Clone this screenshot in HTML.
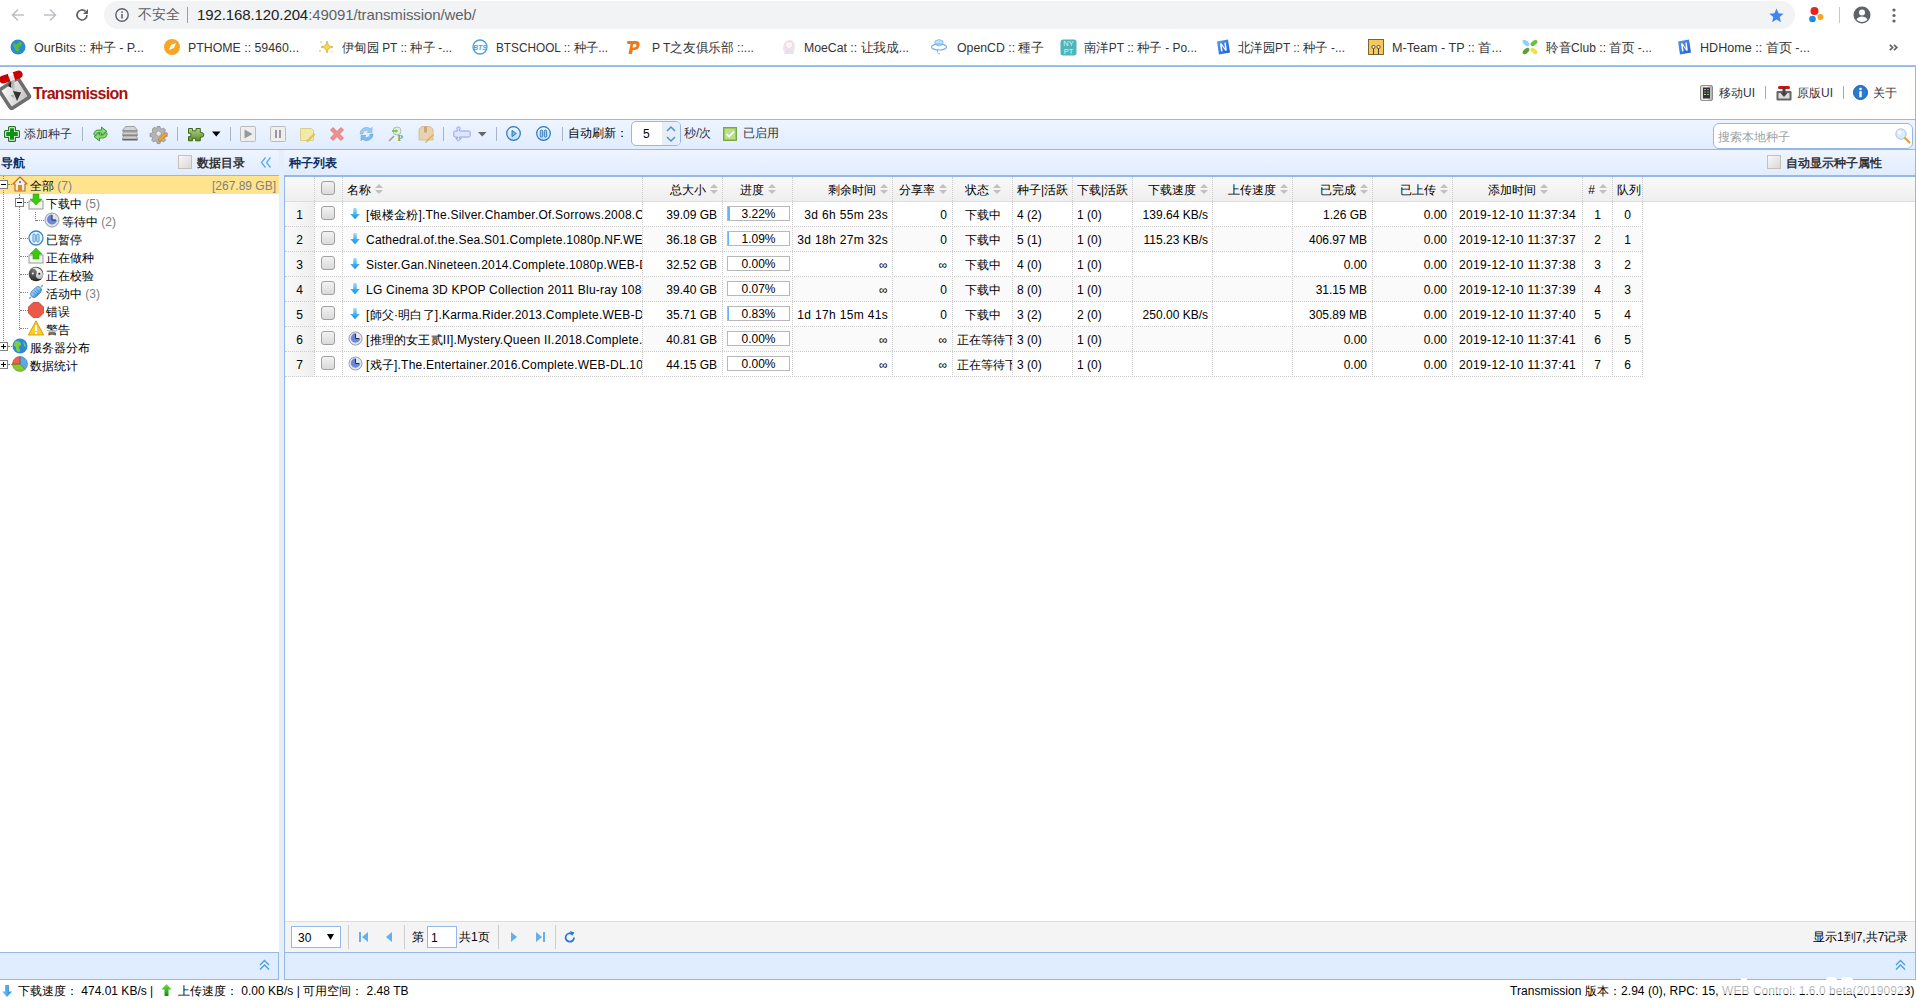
<!DOCTYPE html>
<html><head><meta charset="utf-8">
<style>
*{box-sizing:border-box;margin:0;padding:0}
html,body{width:1916px;height:1000px;overflow:hidden;background:#fff;font-family:"Liberation Sans",sans-serif;font-size:12px;color:#000}
.a{position:absolute}
.t{position:absolute;white-space:nowrap;line-height:1}
svg{position:absolute;overflow:visible}
/* chrome */
#chrome{left:0;top:0;width:1916px;height:66px;background:#fff}
#omni{left:104px;top:1px;width:1691px;height:28px;border-radius:14px;background:#f1f3f4}
.bm{position:absolute;top:40px;height:16px;font-size:12.5px;color:#333;white-space:nowrap;line-height:16px}
/* page */
.pb{border:0 solid #95b8e7}
.ph{background:linear-gradient(#eff5ff,#e0ecff)}
.sep{position:absolute;width:1px;height:14px;background:#a8b4c8;top:127px}
.ttl{font-weight:bold;color:#0e2d5f}
.grid td{}
.hd{position:absolute;top:177px;height:24px;line-height:26px;color:#000;white-space:nowrap}
.vl{position:absolute;width:0;border-left:1px dotted #ccc}
.hl{position:absolute;height:0;border-top:1px dotted #ccc}
.cb{position:absolute;width:14px;height:14px;border:1px solid #a0a0a0;border-radius:3px;background:linear-gradient(#f2f2f2,#dadada)}
.row{position:absolute;left:285px;width:1357px;height:25px}
.c{position:absolute;top:0;height:24px;line-height:26px;white-space:nowrap;overflow:hidden}
.r{text-align:right}
.ctr{text-align:center}
.pg{position:absolute;top:3px;width:60px;height:16px;border:1px solid #95b8e7;background:#fff;text-align:center;line-height:14px}
.tn{position:absolute;height:18px;line-height:20px;white-space:nowrap}
.cnt{color:#808080}
.dv{position:absolute;width:0;border-left:1px dotted #808080}
.dh{position:absolute;height:0;border-top:1px dotted #808080}
.hit{position:absolute;width:9px;height:9px;border:1px solid #808080;background:#fff}
.hit:before{content:"";position:absolute;left:1px;top:3px;width:5px;height:1px;background:#000}
.plus:after{content:"";position:absolute;left:3px;top:1px;width:1px;height:5px;background:#000}
</style></head><body>
<svg width="0" height="0" style="position:absolute"><defs><linearGradient id="arw" x1="0" y1="0" x2="0" y2="1"><stop offset="0" stop-color="#a8dcfc"/><stop offset="0.55" stop-color="#3ab0f6"/><stop offset="1" stop-color="#1a90e8"/></linearGradient></defs></svg>
<!-- ============ BROWSER CHROME ============ -->

<div id="chrome" class="a">
  <div id="omni" class="a"></div>
  <svg style="left:11px;top:8px" width="14" height="14" viewBox="0 0 14 14"><path d="M13 7H2M7 1.5L1.5 7 7 12.5" stroke="#bdc1c6" stroke-width="1.6" fill="none"/></svg>
  <svg style="left:43px;top:8px" width="14" height="14" viewBox="0 0 14 14"><path d="M1 7h11M7 1.5L12.5 7 7 12.5" stroke="#bdc1c6" stroke-width="1.6" fill="none"/></svg>
  <svg style="left:75px;top:8px" width="14" height="14" viewBox="0 0 14 14"><path d="M12 7a5 5 0 1 1-1.5-3.6" stroke="#5f6368" stroke-width="1.7" fill="none"/><path d="M13 1v5H8z" fill="#5f6368"/></svg>
  <svg style="left:115px;top:8px" width="14" height="14" viewBox="0 0 14 14"><circle cx="7" cy="7" r="6.2" stroke="#5f6368" stroke-width="1.4" fill="none"/><rect x="6.2" y="6" width="1.6" height="4.5" fill="#5f6368"/><rect x="6.2" y="3.3" width="1.6" height="1.6" fill="#5f6368"/></svg>
  <div class="t" style="left:138px;top:7px;font-size:14px;color:#5f6368">不安全</div>
  <div class="a" style="left:187px;top:7px;width:1px;height:16px;background:#9aa0a6"></div>
  <div class="t" style="left:197px;top:7px;font-size:15px;color:#202124;letter-spacing:-0.1px">192.168.120.204<span style="color:#5f6368">:49091/transmission/web/</span></div>
  <svg style="left:1768px;top:7px" width="17" height="17" viewBox="0 0 24 24"><path d="M12 2l2.9 6.9 7.1.6-5.4 4.7 1.6 7.2L12 17.6 5.8 21.4l1.6-7.2L2 9.5l7.1-.6z" fill="#4285f4"/></svg>
  <svg style="left:1808px;top:6px" width="18" height="18" viewBox="0 0 18 18"><circle cx="6.5" cy="5" r="4" fill="#e8221f"/><circle cx="4.5" cy="13" r="3.3" fill="#1e88e5"/><circle cx="12.5" cy="11" r="3" fill="#f5a623"/></svg>
  <div class="a" style="left:1839px;top:7px;width:1px;height:16px;background:#c8c8c8"></div>
  <svg style="left:1853px;top:6px" width="18" height="18" viewBox="0 0 18 18"><circle cx="9" cy="9" r="8.5" fill="#5f6368"/><circle cx="9" cy="6.5" r="3" fill="#fff"/><path d="M3.5 13.5c1.5-2.2 3.3-3 5.5-3s4 .8 5.5 3c-1.3 1.6-3.3 2.5-5.5 2.5s-4.2-.9-5.5-2.5z" fill="#fff"/></svg>
  <svg style="left:1892px;top:8px" width="4" height="16" viewBox="0 0 4 16"><circle cx="2" cy="2" r="1.6" fill="#5f6368"/><circle cx="2" cy="7.5" r="1.6" fill="#5f6368"/><circle cx="2" cy="13" r="1.6" fill="#5f6368"/></svg>
  <svg style="left:10px;top:39px" width="16" height="16" viewBox="0 0 16 16"><circle cx="8" cy="8" r="7.5" fill="#2b8ad8"/><path d="M3 5c2-1 3 1 4 0s2-3 4-2 1 3 0 4-3 1-2 3-2 3-3 2-1-3-2-4-1-2-1-3z" fill="#5cb83a"/></svg>
  <div class="bm" style="left:34px;transform:scaleX(1.002);transform-origin:0 0">OurBits :: 种子 - P...</div>
  <svg style="left:164px;top:39px" width="16" height="16" viewBox="0 0 16 16"><circle cx="8" cy="8" r="8" fill="#f5a623"/><path d="M5 11l2-5 5-2-2 5z" fill="#fff"/></svg>
  <div class="bm" style="left:188px;transform:scaleX(0.987);transform-origin:0 0">PTHOME :: 59460...</div>
  <svg style="left:318px;top:39px" width="16" height="16" viewBox="0 0 16 16"><path d="M9 2l1.5 4.5L15 8l-4.5 1.5L9 14 7.5 9.5 3 8l4.5-1.5z" fill="#f6d850" stroke="#c8a020" stroke-width="0.6"/><circle cx="3" cy="3" r="1" fill="#f0d870"/><circle cx="2" cy="12" r="0.9" fill="#e8d070"/><circle cx="14" cy="13" r="0.8" fill="#e8d070"/></svg>
  <div class="bm" style="left:342px;transform:scaleX(0.947);transform-origin:0 0">伊甸园 PT :: 种子 -...</div>
  <svg style="left:472px;top:39px" width="16" height="16" viewBox="0 0 16 16"><circle cx="8" cy="8" r="7" stroke="#4a9fd8" stroke-width="1.3" fill="none"/><text x="8" y="10.5" font-size="7" font-family="Liberation Sans" font-style="italic" font-weight="bold" fill="#4a9fd8" text-anchor="middle">BTS</text></svg>
  <div class="bm" style="left:496px;transform:scaleX(0.944);transform-origin:0 0">BTSCHOOL :: 种子...</div>
  <svg style="left:626px;top:39px" width="16" height="16" viewBox="0 0 16 16"><path d="M1 2H9.5Q14.5 2 13.5 6.5T8 11H6.8L5.8 15H2.5L4.6 5H1.5Z" fill="#f07818"/><path d="M7.3 5L6.5 8.5H8Q10.3 8.5 10.5 6.7T8.8 5Z" fill="#fff"/></svg>
  <div class="bm" style="left:652px;transform:scaleX(0.973);transform-origin:0 0">P T之友俱乐部 ::...</div>
  <svg style="left:781px;top:38px" width="16" height="17" viewBox="0 0 16 17"><path d="M3 14C1 10 2 3 8 2s7 7 5 12" fill="#f4e4ea"/><path d="M4 6Q8 1 12 6Q12 10 8 11Q4 10 4 6Z" fill="#fbf4f6" stroke="#e8c8d4" stroke-width="0.6"/><path d="M3 16L5 11H11L13 16Z" fill="#e8e0f0"/></svg>
  <div class="bm" style="left:804px;transform:scaleX(0.980);transform-origin:0 0">MoeCat :: 让我成...</div>
  <svg style="left:931px;top:38px" width="16" height="17" viewBox="0 0 16 17"><path d="M4 3Q8 0 12 3Q13 7 8 8Q3 7 4 3Z" fill="#bfe0f8" stroke="#7ab8e8" stroke-width="0.8"/><ellipse cx="8" cy="9" rx="7.5" ry="3" fill="none" stroke="#6ab0e8" stroke-width="1.1"/><path d="M7 11Q5 15 9 16" stroke="#7ab8e8" stroke-width="1" fill="none"/></svg>
  <div class="bm" style="left:957px;transform:scaleX(0.983);transform-origin:0 0">OpenCD :: 種子</div>
  <svg style="left:1060px;top:39px" width="17" height="17" viewBox="0 0 17 17"><rect x="0.5" y="0.5" width="16" height="16" rx="2.5" fill="#4cb6be"/><text x="8.5" y="7.3" font-size="7.5" fill="#d8f2f4" text-anchor="middle" font-family="Liberation Sans">NY</text><text x="8.5" y="15" font-size="7.5" fill="#d8f2f4" text-anchor="middle" font-family="Liberation Sans">PT</text></svg>
  <div class="bm" style="left:1084px;transform:scaleX(0.954);transform-origin:0 0">南洋PT :: 种子 - Po...</div>
  <svg style="left:1215px;top:39px" width="16" height="16" viewBox="0 0 16 16"><defs><linearGradient id="ng" x1="0" y1="0" x2="1" y2="1"><stop offset="0" stop-color="#5aa0f0"/><stop offset="1" stop-color="#1a5ad0"/></linearGradient></defs><path d="M2 2.5L13 0.5 15 13.5 4 15.5Z" fill="url(#ng)"/><path d="M5 4.5L6.5 4.2 10 9.5 9.3 3.8 10.8 3.5 11.8 11.5 10.3 11.8 6.8 6.5 7.5 12.2 6 12.5Z" fill="#fff"/></svg>
  <div class="bm" style="left:1238px;transform:scaleX(0.949);transform-origin:0 0">北洋园PT :: 种子 -...</div>
  <svg style="left:1368px;top:39px" width="16" height="16" viewBox="0 0 16 16"><rect x="0.5" y="0.5" width="15" height="15" fill="#f8c858" stroke="#6a5a30" stroke-width="0.9"/><circle cx="5.5" cy="8" r="1.6" fill="#fff" stroke="#333" stroke-width="0.8"/><circle cx="10.5" cy="8" r="1.6" fill="#fff" stroke="#333" stroke-width="0.8"/><path d="M5.5 9.6V15.5M10.5 9.6V15.5" stroke="#333" stroke-width="0.9"/></svg>
  <div class="bm" style="left:1392px;transform:scaleX(1.008);transform-origin:0 0">M-Team - TP :: 首...</div>
  <svg style="left:1522px;top:39px" width="16" height="16" viewBox="0 0 16 16"><ellipse cx="4" cy="4" rx="4" ry="2.2" transform="rotate(40 4 4)" fill="#8cd0f8"/><ellipse cx="12" cy="4" rx="4" ry="2.2" transform="rotate(-40 12 4)" fill="#6cc040"/><ellipse cx="4" cy="12" rx="4" ry="2.2" transform="rotate(-40 4 12)" fill="#5aa030"/><ellipse cx="12" cy="12" rx="4" ry="2.2" transform="rotate(40 12 12)" fill="#f0e040"/></svg>
  <div class="bm" style="left:1546px;transform:scaleX(0.966);transform-origin:0 0">聆音Club :: 首页 -...</div>
  <svg style="left:1676px;top:39px" width="16" height="16" viewBox="0 0 16 16"><defs><linearGradient id="ng2" x1="0" y1="0" x2="1" y2="1"><stop offset="0" stop-color="#5aa0f0"/><stop offset="1" stop-color="#1a5ad0"/></linearGradient></defs><path d="M2 2.5L13 0.5 15 13.5 4 15.5Z" fill="url(#ng2)"/><path d="M5 4.5L6.5 4.2 10 9.5 9.3 3.8 10.8 3.5 11.8 11.5 10.3 11.8 6.8 6.5 7.5 12.2 6 12.5Z" fill="#fff"/></svg>
  <div class="bm" style="left:1700px;transform:scaleX(1.006);transform-origin:0 0">HDHome :: 首页 -...</div>
  <svg style="left:1889px;top:44px" width="9" height="7" viewBox="0 0 9 7"><path d="M0.8 0.8L3.6 3.5 0.8 6.2M5 0.8L7.8 3.5 5 6.2" stroke="#5f6368" stroke-width="1.7" fill="none"/></svg>
  <div class="a" style="left:0;top:65px;width:1916px;height:1px;background:#c0bdbb"></div>
</div>

<!-- ============ PAGE ============ -->
<!-- header -->
<div class="a" style="left:0;top:66px;width:1916px;height:1px;background:#95b8e7"></div>
<div class="a" style="left:1915px;top:66px;width:1px;height:914px;background:#95b8e7"></div>
<svg style="left:0;top:68px" width="34" height="46" viewBox="0 0 34 46">
  <defs><linearGradient id="lg1" x1="0" y1="0" x2="1" y2="1"><stop offset="0" stop-color="#fafafa"/><stop offset="1" stop-color="#c4c4c4"/></linearGradient>
  <linearGradient id="lg2" x1="0" y1="0" x2="1" y2="0"><stop offset="0" stop-color="#777"/><stop offset="0.5" stop-color="#ddd"/><stop offset="1" stop-color="#888"/></linearGradient></defs>
  <g transform="rotate(-33 14.5 25.5)"><rect x="1.5" y="12.5" width="26" height="26" rx="3.5" fill="#6e6e6e"/><rect x="5" y="16" width="19" height="19" rx="1" fill="url(#lg1)"/></g>
  <path d="M9.5 9 L13.5 8 L17.5 25 L21 24 L17 33 L10.5 27.5 L14 26.5 Z" fill="url(#lg2)"/>
  <path d="M13 23 L21 24.5 L17 33 Z" fill="#1a1a1a" opacity="0.85"/>
  <path d="M8 18 L10.5 13 L11.5 20 Z" fill="#222"/>
  <g transform="rotate(-18 11 9)"><rect x="-1" y="5" width="24" height="8" rx="4" fill="#cc0000"/><rect x="9" y="5" width="5" height="8" fill="#e8e8e8"/><rect x="9" y="5" width="5" height="3" fill="#fff"/></g>
</svg>
<div class="t" style="left:33px;top:86px;font-size:16px;font-weight:bold;color:#a8110c;letter-spacing:-0.72px">Transmission</div>
<!-- header right links -->
<svg style="left:1700px;top:85px" width="13" height="16" viewBox="0 0 13 16"><defs><linearGradient id="ph" x1="0" y1="0" x2="1" y2="0"><stop offset="0" stop-color="#d8d8d8"/><stop offset="0.5" stop-color="#f4f4f4"/><stop offset="1" stop-color="#a8a8a8"/></linearGradient></defs><rect x="0.5" y="0.5" width="12" height="15" rx="1.5" fill="url(#ph)" stroke="#777" stroke-width="0.8"/><rect x="3" y="2.5" width="7" height="11" fill="#333"/><rect x="4" y="4" width="2" height="1" fill="#7c7"/><rect x="7" y="4" width="2" height="1" fill="#c66"/><rect x="4" y="6.5" width="2" height="1" fill="#69d"/><rect x="7" y="6.5" width="2" height="1" fill="#69d"/><rect x="4" y="9" width="2" height="1" fill="#dc6"/><rect x="7" y="9" width="2" height="1" fill="#7c7"/></svg>
<div class="t" style="left:1719px;top:87px;color:#333">移动UI</div>
<div class="a" style="left:1765px;top:86px;width:1px;height:13px;background:#a8a8c0"></div>
<svg style="left:1776px;top:85px" width="16" height="16" viewBox="0 0 16 16"><rect x="2" y="1" width="12" height="3" rx="1.5" fill="#cc1111"/><rect x="0.5" y="6" width="15" height="9.5" rx="1" fill="#666"/><rect x="2.5" y="8" width="11" height="5.5" fill="#ddd"/><path d="M6.5 2h3v6h2l-3.5 4-3.5-4h2z" fill="#444"/></svg>
<div class="t" style="left:1797px;top:87px;color:#333">原版UI</div>
<div class="a" style="left:1843px;top:86px;width:1px;height:13px;background:#a8a8c0"></div>
<svg style="left:1853px;top:85px" width="15" height="15" viewBox="0 0 15 15"><circle cx="7.5" cy="7.5" r="7" fill="#2a7ad0" stroke="#1a5aa8"/><circle cx="7.5" cy="4" r="1.3" fill="#fff"/><rect x="6.3" y="6.2" width="2.4" height="6" fill="#fff"/></svg>
<div class="t" style="left:1873px;top:87px;color:#333">关于</div>

<!-- toolbar -->
<div class="a ph" style="left:0;top:119px;width:1915px;height:31px;border-top:1px solid #95b8e7;border-bottom:1px solid #95b8e7"></div>
<svg style="left:4px;top:126px" width="16" height="16" viewBox="0 0 16 16"><path d="M5.5 0.6H10.5Q11.4 0.6 11.4 1.5V4.6H14.5Q15.4 4.6 15.4 5.5V10.5Q15.4 11.4 14.5 11.4H11.4V14.5Q11.4 15.4 10.5 15.4H5.5Q4.6 15.4 4.6 14.5V11.4H1.5Q0.6 11.4 0.6 10.5V5.5Q0.6 4.6 1.5 4.6H4.6V1.5Q4.6 0.6 5.5 0.6Z" fill="#fff" stroke="#2a6e2a" stroke-width="1.2"/><path d="M6 2.2H10V6H13.8V10H10V13.8H6V10H2.2V6H6Z" fill="#0c940c"/></svg>
<div class="t" style="left:24px;top:128px;color:#333">添加种子</div>
<div class="sep" style="left:82px"></div>
<svg style="left:93px;top:126px" width="15" height="16" viewBox="0 0 15 16"><path d="M0.8 8.5C1 5.5 3 4 5.5 4H8.5V1L13.8 5.3 8.5 9.6V7H5.8C4 7 3 8 2.6 9.8Z" fill="#86dc72" stroke="#2e8a2e" stroke-width="0.9" stroke-linejoin="round"/><path d="M14.2 7.5C14 10.5 12 12 9.5 12H6.5V15L1.2 10.7 6.5 6.4V9H9.2C11 9 12 8 12.4 6.2Z" fill="#86dc72" stroke="#2e8a2e" stroke-width="0.9" stroke-linejoin="round"/></svg>
<svg style="left:122px;top:126px" width="16" height="15" viewBox="0 0 16 15"><path d="M3.5 0.5H12.5L15.5 4.5H0.5Z" fill="#d4d4d4" stroke="#9a9a9a" stroke-width="0.9" stroke-linejoin="round"/><path d="M0.5 4.5H15.5V5.8H0.5Z" fill="#8a8a8a"/><path d="M1.5 6H14.5L15.5 8.8H0.5Z" fill="#cfcfcf" stroke="#9a9a9a" stroke-width="0.9" stroke-linejoin="round"/><path d="M0.5 8.8H15.5V10H0.5Z" fill="#7a7a7a"/><path d="M1.5 10H14.5L15.5 13H0.5Z" fill="#cfcfcf" stroke="#9a9a9a" stroke-width="0.9" stroke-linejoin="round"/><path d="M0.5 13H15.5V14.5H0.5Z" fill="#666"/></svg>
<svg style="left:151px;top:126px" width="17" height="16" viewBox="0 0 17 16"><g fill="#b4b4b4" stroke="#8a8a8a" stroke-width="0.8"><path d="M6.5 0.5h3l.4 2 1.6.8 1.8-1.1 2 2-1.1 1.8.8 1.6 2 .4v3l-2 .4-.8 1.6 1.1 1.8-2 2-1.8-1.1-1.6.8-.4 2h-3l-.4-2-1.6-.8-1.8 1.1-2-2 1.1-1.8-.8-1.6-2-.4v-3l2-.4.8-1.6L1.5 3.2l2-2 1.8 1.1 1.6-.8z" transform="scale(0.95)"/></g><circle cx="7.6" cy="7.6" r="2.6" fill="#e8e8e8" stroke="#999" stroke-width="0.8"/><path d="M8 15.5L7.5 13 14 6.5 16 8.5 9.5 15Z" fill="#f0a828" stroke="#b87010" stroke-width="0.6"/><path d="M14 6.5l1-1 2 2-1 1z" fill="#e080d0"/></svg>
<div class="sep" style="left:177px"></div>
<svg style="left:188px;top:128px" width="17" height="14" viewBox="0 0 17 14"><defs><linearGradient id="pz" x1="0" y1="0" x2="0" y2="1"><stop offset="0" stop-color="#b4d08a"/><stop offset="1" stop-color="#5a8a28"/></linearGradient></defs><path d="M0.5 0.5H4.5V2.8H8V0.5H12.3V4.6H13.5A2.3 2.3 0 0 1 13.5 9.2H12.3V12.8H7.6V10.3H4.6V12.8H0.5V8.6H2.8V5.3H0.5Z" fill="url(#pz)" stroke="#3e6a18" stroke-width="1" stroke-linejoin="round"/></svg>
<svg style="left:212px;top:131px" width="9" height="6" viewBox="0 0 9 6"><path d="M0 0.5h8.5L4.25 5.5z" fill="#000"/></svg>
<div class="sep" style="left:230px"></div>
<svg style="left:240px;top:126px" width="16" height="16" viewBox="0 0 16 16"><rect x="0.5" y="0.5" width="15" height="15" rx="1" fill="#eee" stroke="#bbb"/><path d="M4.5 3.5l8 4.5-8 4.5z" fill="#999"/></svg>
<svg style="left:270px;top:126px" width="16" height="16" viewBox="0 0 16 16"><rect x="0.5" y="0.5" width="15" height="15" rx="1" fill="#eee" stroke="#bbb"/><rect x="5" y="4" width="2" height="8" fill="#999"/><rect x="9" y="4" width="2" height="8" fill="#999"/></svg>
<svg style="left:300px;top:126px" width="16" height="16" viewBox="0 0 16 16"><path d="M0.5 2.5h11l2 2v10h-13z" fill="#f2eaa8" stroke="#d8cf8a"/><path d="M6 15l8-8 1.5 1.5-8 8z" fill="#e0c060"/></svg>
<svg style="left:329px;top:126px" width="16" height="16" viewBox="0 0 16 16"><path d="M1.5 4L4 1.5 8 5.5 12 1.5 14.5 4 10.5 8 14.5 12 12 14.5 8 10.5 4 14.5 1.5 12 5.5 8z" fill="#f29090" stroke="#e07070" stroke-width="0.8" stroke-linejoin="round"/></svg>
<svg style="left:359px;top:126px" width="15" height="16" viewBox="0 0 15 16"><path d="M1 8A6.5 6.5 0 0 1 11.5 2.8L13 1.3V6.5H8L9.6 4.9A3.8 3.8 0 0 0 3.8 8Z" fill="#9ccaf2" stroke="#7ab4e8" stroke-width="0.6"/><path d="M14 8A6.5 6.5 0 0 1 3.5 13.2L2 14.7V9.5H7L5.4 11.1A3.8 3.8 0 0 0 11.2 8Z" fill="#7cbcf0" stroke="#5aa4e4" stroke-width="0.6"/></svg>
<svg style="left:388px;top:126px" width="16" height="16" viewBox="0 0 16 16"><circle cx="9" cy="5" r="4" fill="#e8f0e8" stroke="#aac0aa"/><path d="M1 15l5-5" stroke="#999" stroke-width="1.5"/><path d="M4 4h4l-1.5-2 4 3-4 3L8 6H4z" fill="#7cc86a"/><text x="9.5" y="15" font-size="9" font-weight="bold" font-family="Liberation Serif" fill="#6aaa50">P</text></svg>
<svg style="left:418px;top:126px" width="16" height="16" viewBox="0 0 16 16"><path d="M1 3l3-2.5h8L15 3v11H1z" fill="#e8d2b0" stroke="#d0b890" stroke-width="0.8"/><rect x="6" y="0.5" width="3" height="6" fill="#c8a878"/><path d="M7 16l8-8 1 1-8 8z" fill="#e0b050"/></svg>
<div class="sep" style="left:443px"></div>
<svg style="left:453px;top:126px" width="18" height="16" viewBox="0 0 18 16"><path d="M5.5 0.8A1.6 1.6 0 0 1 6.6 3.6V5H15.6Q17.2 5 17.2 6.6V9.4Q17.2 11 15.6 11H6.6V12.4H8.2L5.5 15.2 2.8 12.4H4.4V11H2.4Q0.8 11 0.8 9.4V6.6Q0.8 5 2.4 5H4.4V3.6A1.6 1.6 0 0 1 5.5 0.8Z" fill="#dfe5fa" stroke="#8e9ff0" stroke-width="1"/></svg>
<svg style="left:478px;top:132px" width="9" height="5" viewBox="0 0 9 5"><path d="M0 0h8.5L4.25 4.5z" fill="#666"/></svg>
<div class="sep" style="left:496px"></div>
<svg style="left:506px;top:126px" width="15" height="15" viewBox="0 0 15 15"><defs><linearGradient id="pc" x1="0" y1="0" x2="0" y2="1"><stop offset="0" stop-color="#f4faff"/><stop offset="1" stop-color="#b8dcf6"/></linearGradient></defs><circle cx="7.5" cy="7.5" r="6.8" fill="url(#pc)" stroke="#2f74b8" stroke-width="1.2"/><path d="M6 4.3L10.3 7.5 6 10.7Z" fill="#6ab8f0" stroke="#2f74b8" stroke-width="0.9" stroke-linejoin="round"/></svg>
<svg style="left:536px;top:126px" width="15" height="15" viewBox="0 0 15 15"><circle cx="7.5" cy="7.5" r="6.8" fill="url(#pc)" stroke="#2f74b8" stroke-width="1.2"/><rect x="4.3" y="4" width="2.4" height="7" rx="1.2" fill="#9ad0f6" stroke="#2f74b8" stroke-width="0.9"/><rect x="8.3" y="4" width="2.4" height="7" rx="1.2" fill="#9ad0f6" stroke="#2f74b8" stroke-width="0.9"/></svg>
<div class="sep" style="left:562px"></div>
<div class="t" style="left:568px;top:127px;color:#000">自动刷新：</div>
<div class="a" style="left:631px;top:121px;width:50px;height:25px;border:1px solid #95b8e7;border-radius:5px;background:#fff;overflow:hidden">
  <div class="a" style="left:30px;top:0;width:19px;height:23px;background:#e7eef8"></div>
  <div class="t" style="left:11px;top:6px">5</div>
  <svg style="left:33px;top:3px" width="12" height="18" viewBox="0 0 12 18"><path d="M2 6l4-4 4 4" stroke="#4a90d8" stroke-width="1.5" fill="none"/><path d="M2 12l4 4 4-4" stroke="#4a90d8" stroke-width="1.5" fill="none"/></svg>
</div>
<div class="t" style="left:684px;top:127px;color:#333">秒/次</div>
<svg style="left:723px;top:127px" width="14" height="14" viewBox="0 0 14 14"><rect x="0.5" y="0.5" width="13" height="13" fill="#9bc85a" stroke="#7aa840"/><rect x="2" y="2" width="10" height="10" fill="#b8e08a"/><path d="M3.5 7l2.5 2.5 5-5" stroke="#fff" stroke-width="1.6" fill="none"/></svg>
<div class="t" style="left:743px;top:127px;color:#333">已启用</div>
<!-- search -->
<div class="a" style="left:1713px;top:123px;width:200px;height:26px;border:1px solid #95b8e7;border-radius:6px;background:#fff"></div>
<div class="t" style="left:1718px;top:131px;color:#a0a0a0">搜索本地种子</div>
<svg style="left:1895px;top:128px" width="16" height="16" viewBox="0 0 16 16"><circle cx="6" cy="6" r="5.2" fill="#d8ecfc" stroke="#b0c8dc" stroke-width="1"/><circle cx="4.5" cy="4.5" r="2" fill="#f4faff"/><path d="M10 10l4.5 4.5" stroke="#e0a048" stroke-width="2.2" stroke-linecap="round"/></svg>

<!-- left panel -->
<div class="a ph" style="left:0;top:150px;width:279px;height:26px;border-bottom:1px solid #95b8e7"></div>
<div class="t ttl" style="left:1px;top:157px">导航</div>
<div class="cb" style="left:178px;top:155px;border-color:#c8c0b0;border-radius:0;background:linear-gradient(135deg,#f8f8f8,#d8d8d8)"></div>
<div class="t ttl" style="left:197px;top:157px;color:#333">数据目录</div>
<svg style="left:260px;top:157px" width="12" height="11" viewBox="0 0 12 11"><path d="M5.5 0.5L1.5 5.5 5.5 10.5M10.5 0.5L6.5 5.5 10.5 10.5" stroke="#5aaaf0" stroke-width="1.3" fill="none"/></svg>
<!-- splitter -->
<div class="a" style="left:279px;top:150px;width:5px;height:830px;background:#e6eef8"></div>
<!-- right panel header -->
<div class="a ph" style="left:284px;top:150px;width:1631px;height:26px"></div>
<div class="t ttl" style="left:289px;top:157px">种子列表</div>
<div class="cb" style="left:1767px;top:155px;border-color:#c8c0b0;border-radius:0;background:linear-gradient(135deg,#f8f8f8,#d8d8d8)"></div>
<div class="t ttl" style="left:1786px;top:157px;color:#333">自动显示种子属性</div>
<!-- datagrid frame -->
<div class="a" style="left:284px;top:175px;width:1631px;height:2px;background:#95b8e7"></div>
<div class="a" style="left:284px;top:176px;width:1px;height:776px;background:#95b8e7"></div>
<!-- tree -->
<div class="a" style="left:0;top:176px;width:279px;height:18px;background:#ffe48d"></div>
<div class="dv" style="left:3px;top:176px;height:171px"></div>
<div class="dv" style="left:19px;top:194px;height:136px"></div>
<div class="dv" style="left:35px;top:212px;height:9px"></div>
<div class="dh" style="left:8px;top:184px;width:4px"></div>
<div class="dh" style="left:24px;top:202px;width:4px"></div>
<div class="dh" style="left:36px;top:220px;width:8px"></div>
<div class="dh" style="left:20px;top:238px;width:8px"></div>
<div class="dh" style="left:20px;top:256px;width:8px"></div>
<div class="dh" style="left:20px;top:274px;width:8px"></div>
<div class="dh" style="left:20px;top:292px;width:8px"></div>
<div class="dh" style="left:20px;top:310px;width:8px"></div>
<div class="dh" style="left:20px;top:328px;width:8px"></div>
<div class="dh" style="left:8px;top:346px;width:4px"></div>
<div class="dh" style="left:8px;top:364px;width:4px"></div>
<div class="hit" style="left:-1px;top:180px"></div>
<div class="hit" style="left:15px;top:198px"></div>
<div class="hit plus" style="left:-1px;top:342px"></div>
<div class="hit plus" style="left:-1px;top:360px"></div>
<svg style="left:12px;top:176px" width="16" height="16" viewBox="0 0 16 16"><path d="M8 1L1 8h2v7h10V8h2z" fill="#f5eedc" stroke="#b8702a" stroke-width="1.2" stroke-linejoin="round"/><rect x="6" y="9" width="4" height="6" fill="#d88a2a"/><circle cx="8" cy="6" r="1" fill="#2a6ad0"/></svg>
<div class="tn" style="left:30px;top:176px">全部 <span class="cnt">(7)</span></div>
<div class="tn cnt" style="left:212px;top:176px">[267.89 GB]</div>
<svg style="left:28px;top:194px" width="16" height="16" viewBox="0 0 16 16"><rect x="1" y="7" width="14" height="8" fill="#f4f4f0" stroke="#999" stroke-width="1"/><path d="M5 0h6v5h3l-6 6-6-6h3z" fill="#3cc80c" stroke="#2a9a0a" stroke-width="0.5"/></svg>
<div class="tn" style="left:46px;top:194px">下载中 <span class="cnt">(5)</span></div>
<svg style="left:44px;top:212px" width="16" height="16" viewBox="0 0 16 16"><circle cx="8" cy="8" r="7" fill="#dde4f4" stroke="#999" stroke-width="1"/><path d="M8 2.5v5.5h5A5 5 0 1 1 8 2.5z" fill="#6b86d8"/><path d="M8 3v5h4" stroke="#223" stroke-width="1" fill="none"/></svg>
<div class="tn" style="left:62px;top:212px">等待中 <span class="cnt">(2)</span></div>
<svg style="left:28px;top:230px" width="16" height="16" viewBox="0 0 16 16"><circle cx="8" cy="8" r="7" fill="#e8f4fc" stroke="#3a88c8" stroke-width="1.3"/><rect x="5" y="4" width="2.2" height="8" rx="1.1" fill="#e0f0fc" stroke="#3a88c8" stroke-width="0.9"/><rect x="8.8" y="4" width="2.2" height="8" rx="1.1" fill="#e0f0fc" stroke="#3a88c8" stroke-width="0.9"/></svg>
<div class="tn" style="left:46px;top:230px">已暂停</div>
<svg style="left:28px;top:248px" width="16" height="16" viewBox="0 0 16 16"><rect x="1" y="7" width="14" height="8" fill="#f4f4f0" stroke="#999" stroke-width="1"/><path d="M8 0l6 6h-3v5H5V6H2z" fill="#3cc80c" stroke="#2a9a0a" stroke-width="0.5"/></svg>
<div class="tn" style="left:46px;top:248px">正在做种</div>
<svg style="left:28px;top:266px" width="16" height="16" viewBox="0 0 16 16"><defs><radialGradient id="yyg" cx="0.35" cy="0.3" r="0.8"><stop offset="0" stop-color="#777"/><stop offset="1" stop-color="#1a1a1a"/></radialGradient><radialGradient id="yyw" cx="0.6" cy="0.3" r="0.7"><stop offset="0" stop-color="#fafafa"/><stop offset="1" stop-color="#b8b8b8"/></radialGradient></defs><circle cx="8" cy="8" r="7.3" fill="url(#yyg)"/><path d="M1.5 5A7.3 7.3 0 0 1 14.8 10.5 3.4 3.4 0 0 1 8.2 8.4 3.4 3.4 0 0 0 1.5 5Z" fill="url(#yyw)"/><circle cx="4.8" cy="7.6" r="1" fill="#eee"/><circle cx="11.3" cy="7.8" r="1" fill="#222"/></svg>
<div class="tn" style="left:46px;top:266px">正在校验</div>
<svg style="left:28px;top:284px" width="16" height="16" viewBox="0 0 16 16"><defs><linearGradient id="acg" x1="0" y1="0" x2="0" y2="1"><stop offset="0" stop-color="#b8e0fc"/><stop offset="1" stop-color="#4a9ae0"/></linearGradient></defs><path d="M1.2 14.8L3 13M13 3L14.8 1.2" stroke="#999" stroke-width="1.3"/><g transform="rotate(-45 8 8)"><rect x="1.8" y="4.6" width="12.4" height="6.8" rx="3.4" fill="url(#acg)" stroke="#3a7ac0" stroke-width="0.8"/><path d="M5.6 4.8V11.2M8 4.6V11.4M10.4 4.8V11.2" stroke="#3a7ac0" stroke-width="0.7"/></g></svg>
<div class="tn" style="left:46px;top:284px">活动中 <span class="cnt">(3)</span></div>
<svg style="left:28px;top:302px" width="16" height="16" viewBox="0 0 16 16"><path d="M5 0.5h6l4.5 4.5v6L11 15.5H5L0.5 11V5z" fill="#e95a48" stroke="#c84030" stroke-width="0.8"/></svg>
<div class="tn" style="left:46px;top:302px">错误</div>
<svg style="left:28px;top:320px" width="16" height="16" viewBox="0 0 16 16"><path d="M8 1L15.5 15h-15z" fill="#f8d028" stroke="#e8a018" stroke-width="1.2" stroke-linejoin="round"/><rect x="7" y="5" width="2" height="6" fill="#fff"/><rect x="7" y="12" width="2" height="2" fill="#fff"/></svg>
<div class="tn" style="left:46px;top:320px">警告</div>
<svg style="left:12px;top:338px" width="16" height="16" viewBox="0 0 16 16"><circle cx="8" cy="8" r="7.5" fill="#2a8ad8"/><path d="M4 3c3 0 5 1 5 3s-3 2-2 4 2 3 0 4c-2 0-3-2-3-4S1 8 2 6s1-3 2-3z" fill="#7cd040"/><path d="M11 4c2 1 3 3 3 5-1 0-2-1-2-2s-1-2-1-3z" fill="#7cd040"/></svg>
<div class="tn" style="left:30px;top:338px">服务器分布</div>
<svg style="left:12px;top:356px" width="16" height="16" viewBox="0 0 16 16"><path d="M8 8V0.5A7.5 7.5 0 0 1 15.5 8 7.5 7.5 0 0 1 13 13.5z" fill="#5aa8e8" stroke="#2a78c0" stroke-width="0.6"/><path d="M8 8L13 13.5A7.5 7.5 0 0 1 0.5 8z" fill="#88c830" stroke="#4a8a10" stroke-width="0.6"/><path d="M8 8H0.5A7.5 7.5 0 0 1 8 0.5z" fill="#ef6050" stroke="#b83020" stroke-width="0.6"/></svg>
<div class="tn" style="left:30px;top:356px">数据统计</div>
<!-- datagrid header -->
<div class="a" style="left:285px;top:177px;width:1630px;height:24px;background:linear-gradient(#f9f9f9,#efefef)"></div>
<div class="a" style="left:285px;top:201px;width:1630px;height:1px;background:#dddddd"></div>
<div class="hd" style="left:343px;width:299px;text-align:left;padding:0 4px">名称<svg class="si" width="8" height="10" viewBox="0 0 8 10" style="position:static;display:inline-block;vertical-align:0px;margin-left:4px"><path d="M0 4L4 0L8 4z" fill="#c0c0c0"/><path d="M0 6L4 10L8 6z" fill="#c0c0c0"/></svg></div>
<div class="hd" style="left:643px;width:79px;text-align:right;padding:0 4px">总大小<svg class="si" width="8" height="10" viewBox="0 0 8 10" style="position:static;display:inline-block;vertical-align:0px;margin-left:4px"><path d="M0 4L4 0L8 4z" fill="#c0c0c0"/><path d="M0 6L4 10L8 6z" fill="#c0c0c0"/></svg></div>
<div class="hd" style="left:723px;width:69px;text-align:center;padding:0 4px">进度<svg class="si" width="8" height="10" viewBox="0 0 8 10" style="position:static;display:inline-block;vertical-align:0px;margin-left:4px"><path d="M0 4L4 0L8 4z" fill="#c0c0c0"/><path d="M0 6L4 10L8 6z" fill="#c0c0c0"/></svg></div>
<div class="hd" style="left:793px;width:99px;text-align:right;padding:0 4px">剩余时间<svg class="si" width="8" height="10" viewBox="0 0 8 10" style="position:static;display:inline-block;vertical-align:0px;margin-left:4px"><path d="M0 4L4 0L8 4z" fill="#c0c0c0"/><path d="M0 6L4 10L8 6z" fill="#c0c0c0"/></svg></div>
<div class="hd" style="left:893px;width:59px;text-align:center;padding:0 4px">分享率<svg class="si" width="8" height="10" viewBox="0 0 8 10" style="position:static;display:inline-block;vertical-align:0px;margin-left:4px"><path d="M0 4L4 0L8 4z" fill="#c0c0c0"/><path d="M0 6L4 10L8 6z" fill="#c0c0c0"/></svg></div>
<div class="hd" style="left:953px;width:59px;text-align:center;padding:0 4px">状态<svg class="si" width="8" height="10" viewBox="0 0 8 10" style="position:static;display:inline-block;vertical-align:0px;margin-left:4px"><path d="M0 4L4 0L8 4z" fill="#c0c0c0"/><path d="M0 6L4 10L8 6z" fill="#c0c0c0"/></svg></div>
<div class="hd" style="left:1013px;width:59px;text-align:left;padding:0 4px">种子|活跃</div>
<div class="hd" style="left:1073px;width:59px;text-align:left;padding:0 4px">下载|活跃</div>
<div class="hd" style="left:1133px;width:79px;text-align:right;padding:0 4px">下载速度<svg class="si" width="8" height="10" viewBox="0 0 8 10" style="position:static;display:inline-block;vertical-align:0px;margin-left:4px"><path d="M0 4L4 0L8 4z" fill="#c0c0c0"/><path d="M0 6L4 10L8 6z" fill="#c0c0c0"/></svg></div>
<div class="hd" style="left:1213px;width:79px;text-align:right;padding:0 4px">上传速度<svg class="si" width="8" height="10" viewBox="0 0 8 10" style="position:static;display:inline-block;vertical-align:0px;margin-left:4px"><path d="M0 4L4 0L8 4z" fill="#c0c0c0"/><path d="M0 6L4 10L8 6z" fill="#c0c0c0"/></svg></div>
<div class="hd" style="left:1293px;width:79px;text-align:right;padding:0 4px">已完成<svg class="si" width="8" height="10" viewBox="0 0 8 10" style="position:static;display:inline-block;vertical-align:0px;margin-left:4px"><path d="M0 4L4 0L8 4z" fill="#c0c0c0"/><path d="M0 6L4 10L8 6z" fill="#c0c0c0"/></svg></div>
<div class="hd" style="left:1373px;width:79px;text-align:right;padding:0 4px">已上传<svg class="si" width="8" height="10" viewBox="0 0 8 10" style="position:static;display:inline-block;vertical-align:0px;margin-left:4px"><path d="M0 4L4 0L8 4z" fill="#c0c0c0"/><path d="M0 6L4 10L8 6z" fill="#c0c0c0"/></svg></div>
<div class="hd" style="left:1453px;width:129px;text-align:center;padding:0 4px">添加时间<svg class="si" width="8" height="10" viewBox="0 0 8 10" style="position:static;display:inline-block;vertical-align:0px;margin-left:4px"><path d="M0 4L4 0L8 4z" fill="#c0c0c0"/><path d="M0 6L4 10L8 6z" fill="#c0c0c0"/></svg></div>
<div class="hd" style="left:1583px;width:29px;text-align:center;padding:0 4px">#<svg class="si" width="8" height="10" viewBox="0 0 8 10" style="position:static;display:inline-block;vertical-align:0px;margin-left:4px"><path d="M0 4L4 0L8 4z" fill="#c0c0c0"/><path d="M0 6L4 10L8 6z" fill="#c0c0c0"/></svg></div>
<div class="hd" style="left:1613px;width:29px;text-align:left;padding:0 4px">队列</div>
<div class="cb" style="left:321px;top:181px"></div>
<div class="vl" style="left:314px;top:177px;height:24px"></div>
<div class="vl" style="left:342px;top:177px;height:24px"></div>
<div class="vl" style="left:642px;top:177px;height:24px"></div>
<div class="vl" style="left:722px;top:177px;height:24px"></div>
<div class="vl" style="left:792px;top:177px;height:24px"></div>
<div class="vl" style="left:892px;top:177px;height:24px"></div>
<div class="vl" style="left:952px;top:177px;height:24px"></div>
<div class="vl" style="left:1012px;top:177px;height:24px"></div>
<div class="vl" style="left:1072px;top:177px;height:24px"></div>
<div class="vl" style="left:1132px;top:177px;height:24px"></div>
<div class="vl" style="left:1212px;top:177px;height:24px"></div>
<div class="vl" style="left:1292px;top:177px;height:24px"></div>
<div class="vl" style="left:1372px;top:177px;height:24px"></div>
<div class="vl" style="left:1452px;top:177px;height:24px"></div>
<div class="vl" style="left:1582px;top:177px;height:24px"></div>
<div class="vl" style="left:1612px;top:177px;height:24px"></div>
<div class="vl" style="left:1642px;top:177px;height:24px"></div>
<!-- datagrid rows -->
<div class="a" style="left:285px;top:202px;width:1357px;height:25px;background:#fff"></div>
<div class="a" style="left:285px;top:202px;width:29px;height:25px;background:linear-gradient(to right,#f9f9f9,#efefef)"></div>
<div class="c ctr" style="left:285px;top:202px;width:29px">1</div>
<div class="cb" style="left:321px;top:206px"></div>
<div class="c" style="left:343px;top:202px;width:299px"><svg style="left:7px;top:6px" width="10" height="12" viewBox="0 0 10 12"><path d="M3.3 0.9Q3.3 0 4.2 0H5.8Q6.7 0 6.7 0.9V6H9.8L5 11.3 0.2 6H3.3Z" fill="url(#arw)"/></svg><div class="t" style="left:23px;top:7px;letter-spacing:0.22px">[银楼金粉].The.Silver.Chamber.Of.Sorrows.2008.Complete.WEB-DL.1080p</div></div>
<div class="c r" style="left:643px;top:202px;width:79px;padding-right:5px">39.09 GB</div>
<div class="a" style="left:727px;top:206px;width:63px;height:15px;border:1px solid #b8b8b8;background:#fff"><div class="a" style="left:0;top:0;width:2px;height:13px;background:#66b3ff"></div><div class="t" style="left:0;top:1px;width:61px;text-align:center">3.22%</div></div>
<div class="c r" style="left:793px;top:202px;width:99px;padding-right:4px;letter-spacing:0.33px">3d 6h 55m 23s</div>
<div class="c r" style="left:893px;top:202px;width:59px;padding-right:5px">0</div>
<div class="c ctr" style="left:953px;top:202px;width:59px;padding:0 4px">下载中</div>
<div class="c" style="left:1013px;top:202px;width:59px;padding-left:4px">4 (2)</div>
<div class="c" style="left:1073px;top:202px;width:59px;padding-left:4px">1 (0)</div>
<div class="c r" style="left:1133px;top:202px;width:79px;padding-right:4px">139.64 KB/s</div>
<div class="c r" style="left:1293px;top:202px;width:79px;padding-right:5px">1.26 GB</div>
<div class="c r" style="left:1373px;top:202px;width:79px;padding-right:5px">0.00</div>
<div class="c ctr" style="left:1453px;top:202px;width:129px;letter-spacing:0.33px">2019-12-10 11:37:34</div>
<div class="c ctr" style="left:1583px;top:202px;width:29px">1</div>
<div class="c ctr" style="left:1613px;top:202px;width:29px">0</div>
<div class="hl" style="left:285px;top:226px;width:1358px"></div>
<div class="a" style="left:285px;top:227px;width:1357px;height:25px;background:#fafafa"></div>
<div class="a" style="left:285px;top:227px;width:29px;height:25px;background:linear-gradient(to right,#f9f9f9,#efefef)"></div>
<div class="c ctr" style="left:285px;top:227px;width:29px">2</div>
<div class="cb" style="left:321px;top:231px"></div>
<div class="c" style="left:343px;top:227px;width:299px"><svg style="left:7px;top:6px" width="10" height="12" viewBox="0 0 10 12"><path d="M3.3 0.9Q3.3 0 4.2 0H5.8Q6.7 0 6.7 0.9V6H9.8L5 11.3 0.2 6H3.3Z" fill="url(#arw)"/></svg><div class="t" style="left:23px;top:7px;letter-spacing:0.22px">Cathedral.of.the.Sea.S01.Complete.1080p.NF.WEB-DL</div></div>
<div class="c r" style="left:643px;top:227px;width:79px;padding-right:5px">36.18 GB</div>
<div class="a" style="left:727px;top:231px;width:63px;height:15px;border:1px solid #b8b8b8;background:#fff"><div class="a" style="left:0;top:0;width:1px;height:13px;background:#66b3ff"></div><div class="t" style="left:0;top:1px;width:61px;text-align:center">1.09%</div></div>
<div class="c r" style="left:793px;top:227px;width:99px;padding-right:4px;letter-spacing:0.33px">3d 18h 27m 32s</div>
<div class="c r" style="left:893px;top:227px;width:59px;padding-right:5px">0</div>
<div class="c ctr" style="left:953px;top:227px;width:59px;padding:0 4px">下载中</div>
<div class="c" style="left:1013px;top:227px;width:59px;padding-left:4px">5 (1)</div>
<div class="c" style="left:1073px;top:227px;width:59px;padding-left:4px">1 (0)</div>
<div class="c r" style="left:1133px;top:227px;width:79px;padding-right:4px">115.23 KB/s</div>
<div class="c r" style="left:1293px;top:227px;width:79px;padding-right:5px">406.97 MB</div>
<div class="c r" style="left:1373px;top:227px;width:79px;padding-right:5px">0.00</div>
<div class="c ctr" style="left:1453px;top:227px;width:129px;letter-spacing:0.33px">2019-12-10 11:37:37</div>
<div class="c ctr" style="left:1583px;top:227px;width:29px">2</div>
<div class="c ctr" style="left:1613px;top:227px;width:29px">1</div>
<div class="hl" style="left:285px;top:251px;width:1358px"></div>
<div class="a" style="left:285px;top:252px;width:1357px;height:25px;background:#fff"></div>
<div class="a" style="left:285px;top:252px;width:29px;height:25px;background:linear-gradient(to right,#f9f9f9,#efefef)"></div>
<div class="c ctr" style="left:285px;top:252px;width:29px">3</div>
<div class="cb" style="left:321px;top:256px"></div>
<div class="c" style="left:343px;top:252px;width:299px"><svg style="left:7px;top:6px" width="10" height="12" viewBox="0 0 10 12"><path d="M3.3 0.9Q3.3 0 4.2 0H5.8Q6.7 0 6.7 0.9V6H9.8L5 11.3 0.2 6H3.3Z" fill="url(#arw)"/></svg><div class="t" style="left:23px;top:7px;letter-spacing:0.22px">Sister.Gan.Nineteen.2014.Complete.1080p.WEB-DL</div></div>
<div class="c r" style="left:643px;top:252px;width:79px;padding-right:5px">32.52 GB</div>
<div class="a" style="left:727px;top:256px;width:63px;height:15px;border:1px solid #b8b8b8;background:#fff"><div class="a" style="left:0;top:0;width:0px;height:13px;background:#66b3ff"></div><div class="t" style="left:0;top:1px;width:61px;text-align:center">0.00%</div></div>
<div class="c r" style="left:793px;top:252px;width:99px;padding-right:4px;letter-spacing:0.33px">∞</div>
<div class="c r" style="left:893px;top:252px;width:59px;padding-right:5px">∞</div>
<div class="c ctr" style="left:953px;top:252px;width:59px;padding:0 4px">下载中</div>
<div class="c" style="left:1013px;top:252px;width:59px;padding-left:4px">4 (0)</div>
<div class="c" style="left:1073px;top:252px;width:59px;padding-left:4px">1 (0)</div>
<div class="c r" style="left:1133px;top:252px;width:79px;padding-right:4px"></div>
<div class="c r" style="left:1293px;top:252px;width:79px;padding-right:5px">0.00</div>
<div class="c r" style="left:1373px;top:252px;width:79px;padding-right:5px">0.00</div>
<div class="c ctr" style="left:1453px;top:252px;width:129px;letter-spacing:0.33px">2019-12-10 11:37:38</div>
<div class="c ctr" style="left:1583px;top:252px;width:29px">3</div>
<div class="c ctr" style="left:1613px;top:252px;width:29px">2</div>
<div class="hl" style="left:285px;top:276px;width:1358px"></div>
<div class="a" style="left:285px;top:277px;width:1357px;height:25px;background:#fafafa"></div>
<div class="a" style="left:285px;top:277px;width:29px;height:25px;background:linear-gradient(to right,#f9f9f9,#efefef)"></div>
<div class="c ctr" style="left:285px;top:277px;width:29px">4</div>
<div class="cb" style="left:321px;top:281px"></div>
<div class="c" style="left:343px;top:277px;width:299px"><svg style="left:7px;top:6px" width="10" height="12" viewBox="0 0 10 12"><path d="M3.3 0.9Q3.3 0 4.2 0H5.8Q6.7 0 6.7 0.9V6H9.8L5 11.3 0.2 6H3.3Z" fill="url(#arw)"/></svg><div class="t" style="left:23px;top:7px;letter-spacing:0.22px">LG Cinema 3D KPOP Collection 2011 Blu-ray 1080p</div></div>
<div class="c r" style="left:643px;top:277px;width:79px;padding-right:5px">39.40 GB</div>
<div class="a" style="left:727px;top:281px;width:63px;height:15px;border:1px solid #b8b8b8;background:#fff"><div class="a" style="left:0;top:0;width:0px;height:13px;background:#66b3ff"></div><div class="t" style="left:0;top:1px;width:61px;text-align:center">0.07%</div></div>
<div class="c r" style="left:793px;top:277px;width:99px;padding-right:4px;letter-spacing:0.33px">∞</div>
<div class="c r" style="left:893px;top:277px;width:59px;padding-right:5px">0</div>
<div class="c ctr" style="left:953px;top:277px;width:59px;padding:0 4px">下载中</div>
<div class="c" style="left:1013px;top:277px;width:59px;padding-left:4px">8 (0)</div>
<div class="c" style="left:1073px;top:277px;width:59px;padding-left:4px">1 (0)</div>
<div class="c r" style="left:1133px;top:277px;width:79px;padding-right:4px"></div>
<div class="c r" style="left:1293px;top:277px;width:79px;padding-right:5px">31.15 MB</div>
<div class="c r" style="left:1373px;top:277px;width:79px;padding-right:5px">0.00</div>
<div class="c ctr" style="left:1453px;top:277px;width:129px;letter-spacing:0.33px">2019-12-10 11:37:39</div>
<div class="c ctr" style="left:1583px;top:277px;width:29px">4</div>
<div class="c ctr" style="left:1613px;top:277px;width:29px">3</div>
<div class="hl" style="left:285px;top:301px;width:1358px"></div>
<div class="a" style="left:285px;top:302px;width:1357px;height:25px;background:#fff"></div>
<div class="a" style="left:285px;top:302px;width:29px;height:25px;background:linear-gradient(to right,#f9f9f9,#efefef)"></div>
<div class="c ctr" style="left:285px;top:302px;width:29px">5</div>
<div class="cb" style="left:321px;top:306px"></div>
<div class="c" style="left:343px;top:302px;width:299px"><svg style="left:7px;top:6px" width="10" height="12" viewBox="0 0 10 12"><path d="M3.3 0.9Q3.3 0 4.2 0H5.8Q6.7 0 6.7 0.9V6H9.8L5 11.3 0.2 6H3.3Z" fill="url(#arw)"/></svg><div class="t" style="left:23px;top:7px;letter-spacing:0.22px">[師父·明白了].Karma.Rider.2013.Complete.WEB-DL.1080p</div></div>
<div class="c r" style="left:643px;top:302px;width:79px;padding-right:5px">35.71 GB</div>
<div class="a" style="left:727px;top:306px;width:63px;height:15px;border:1px solid #b8b8b8;background:#fff"><div class="a" style="left:0;top:0;width:1px;height:13px;background:#66b3ff"></div><div class="t" style="left:0;top:1px;width:61px;text-align:center">0.83%</div></div>
<div class="c r" style="left:793px;top:302px;width:99px;padding-right:4px;letter-spacing:0.33px">1d 17h 15m 41s</div>
<div class="c r" style="left:893px;top:302px;width:59px;padding-right:5px">0</div>
<div class="c ctr" style="left:953px;top:302px;width:59px;padding:0 4px">下载中</div>
<div class="c" style="left:1013px;top:302px;width:59px;padding-left:4px">3 (2)</div>
<div class="c" style="left:1073px;top:302px;width:59px;padding-left:4px">2 (0)</div>
<div class="c r" style="left:1133px;top:302px;width:79px;padding-right:4px">250.00 KB/s</div>
<div class="c r" style="left:1293px;top:302px;width:79px;padding-right:5px">305.89 MB</div>
<div class="c r" style="left:1373px;top:302px;width:79px;padding-right:5px">0.00</div>
<div class="c ctr" style="left:1453px;top:302px;width:129px;letter-spacing:0.33px">2019-12-10 11:37:40</div>
<div class="c ctr" style="left:1583px;top:302px;width:29px">5</div>
<div class="c ctr" style="left:1613px;top:302px;width:29px">4</div>
<div class="hl" style="left:285px;top:326px;width:1358px"></div>
<div class="a" style="left:285px;top:327px;width:1357px;height:25px;background:#fafafa"></div>
<div class="a" style="left:285px;top:327px;width:29px;height:25px;background:linear-gradient(to right,#f9f9f9,#efefef)"></div>
<div class="c ctr" style="left:285px;top:327px;width:29px">6</div>
<div class="cb" style="left:321px;top:331px"></div>
<div class="c" style="left:343px;top:327px;width:299px"><svg style="left:5px;top:4px" width="15" height="15" viewBox="0 0 16 16"><circle cx="8" cy="8" r="7" fill="#dde4f4" stroke="#999" stroke-width="1"/><path d="M8 2.5v5.5h5A5 5 0 1 1 8 2.5z" fill="#6b86d8"/><path d="M8 3v5h4" stroke="#223" stroke-width="1" fill="none"/></svg><div class="t" style="left:23px;top:7px;letter-spacing:0.22px">[推理的女王贰II].Mystery.Queen II.2018.Complete.WEB-DL</div></div>
<div class="c r" style="left:643px;top:327px;width:79px;padding-right:5px">40.81 GB</div>
<div class="a" style="left:727px;top:331px;width:63px;height:15px;border:1px solid #b8b8b8;background:#fff"><div class="a" style="left:0;top:0;width:0px;height:13px;background:#66b3ff"></div><div class="t" style="left:0;top:1px;width:61px;text-align:center">0.00%</div></div>
<div class="c r" style="left:793px;top:327px;width:99px;padding-right:4px;letter-spacing:0.33px">∞</div>
<div class="c r" style="left:893px;top:327px;width:59px;padding-right:5px">∞</div>
<div class="c ctr" style="left:953px;top:327px;width:59px;padding:0 4px">正在等待下载</div>
<div class="c" style="left:1013px;top:327px;width:59px;padding-left:4px">3 (0)</div>
<div class="c" style="left:1073px;top:327px;width:59px;padding-left:4px">1 (0)</div>
<div class="c r" style="left:1133px;top:327px;width:79px;padding-right:4px"></div>
<div class="c r" style="left:1293px;top:327px;width:79px;padding-right:5px">0.00</div>
<div class="c r" style="left:1373px;top:327px;width:79px;padding-right:5px">0.00</div>
<div class="c ctr" style="left:1453px;top:327px;width:129px;letter-spacing:0.33px">2019-12-10 11:37:41</div>
<div class="c ctr" style="left:1583px;top:327px;width:29px">6</div>
<div class="c ctr" style="left:1613px;top:327px;width:29px">5</div>
<div class="hl" style="left:285px;top:351px;width:1358px"></div>
<div class="a" style="left:285px;top:352px;width:1357px;height:25px;background:#fff"></div>
<div class="a" style="left:285px;top:352px;width:29px;height:25px;background:linear-gradient(to right,#f9f9f9,#efefef)"></div>
<div class="c ctr" style="left:285px;top:352px;width:29px">7</div>
<div class="cb" style="left:321px;top:356px"></div>
<div class="c" style="left:343px;top:352px;width:299px"><svg style="left:5px;top:4px" width="15" height="15" viewBox="0 0 16 16"><circle cx="8" cy="8" r="7" fill="#dde4f4" stroke="#999" stroke-width="1"/><path d="M8 2.5v5.5h5A5 5 0 1 1 8 2.5z" fill="#6b86d8"/><path d="M8 3v5h4" stroke="#223" stroke-width="1" fill="none"/></svg><div class="t" style="left:23px;top:7px;letter-spacing:0.22px">[戏子].The.Entertainer.2016.Complete.WEB-DL.1080p</div></div>
<div class="c r" style="left:643px;top:352px;width:79px;padding-right:5px">44.15 GB</div>
<div class="a" style="left:727px;top:356px;width:63px;height:15px;border:1px solid #b8b8b8;background:#fff"><div class="a" style="left:0;top:0;width:0px;height:13px;background:#66b3ff"></div><div class="t" style="left:0;top:1px;width:61px;text-align:center">0.00%</div></div>
<div class="c r" style="left:793px;top:352px;width:99px;padding-right:4px;letter-spacing:0.33px">∞</div>
<div class="c r" style="left:893px;top:352px;width:59px;padding-right:5px">∞</div>
<div class="c ctr" style="left:953px;top:352px;width:59px;padding:0 4px">正在等待下载</div>
<div class="c" style="left:1013px;top:352px;width:59px;padding-left:4px">3 (0)</div>
<div class="c" style="left:1073px;top:352px;width:59px;padding-left:4px">1 (0)</div>
<div class="c r" style="left:1133px;top:352px;width:79px;padding-right:4px"></div>
<div class="c r" style="left:1293px;top:352px;width:79px;padding-right:5px">0.00</div>
<div class="c r" style="left:1373px;top:352px;width:79px;padding-right:5px">0.00</div>
<div class="c ctr" style="left:1453px;top:352px;width:129px;letter-spacing:0.33px">2019-12-10 11:37:41</div>
<div class="c ctr" style="left:1583px;top:352px;width:29px">7</div>
<div class="c ctr" style="left:1613px;top:352px;width:29px">6</div>
<div class="hl" style="left:285px;top:376px;width:1358px"></div>
<div class="vl" style="left:314px;top:202px;height:175px"></div>
<div class="vl" style="left:342px;top:202px;height:175px"></div>
<div class="vl" style="left:642px;top:202px;height:175px"></div>
<div class="vl" style="left:722px;top:202px;height:175px"></div>
<div class="vl" style="left:792px;top:202px;height:175px"></div>
<div class="vl" style="left:892px;top:202px;height:175px"></div>
<div class="vl" style="left:952px;top:202px;height:175px"></div>
<div class="vl" style="left:1012px;top:202px;height:175px"></div>
<div class="vl" style="left:1072px;top:202px;height:175px"></div>
<div class="vl" style="left:1132px;top:202px;height:175px"></div>
<div class="vl" style="left:1212px;top:202px;height:175px"></div>
<div class="vl" style="left:1292px;top:202px;height:175px"></div>
<div class="vl" style="left:1372px;top:202px;height:175px"></div>
<div class="vl" style="left:1452px;top:202px;height:175px"></div>
<div class="vl" style="left:1582px;top:202px;height:175px"></div>
<div class="vl" style="left:1612px;top:202px;height:175px"></div>
<div class="vl" style="left:1642px;top:202px;height:175px"></div>
<!-- pager -->
<div class="a" style="left:285px;top:921px;width:1630px;height:31px;background:#f4f4f4;border-top:1px solid #dddddd"></div>
<div class="a" style="left:348px;top:925px;width:1px;height:24px;background:#cccccc"></div>
<div class="a" style="left:404px;top:925px;width:1px;height:24px;background:#cccccc"></div>
<div class="a" style="left:498px;top:925px;width:1px;height:24px;background:#cccccc"></div>
<div class="a" style="left:555px;top:925px;width:1px;height:24px;background:#cccccc"></div>
<div class="a" style="left:291px;top:926px;width:50px;height:22px;border:1px solid #95b8e7;background:#fff"><div class="t" style="left:6px;top:5px">30</div><svg style="left:35px;top:7px" width="7" height="6" viewBox="0 0 7 6"><path d="M0 0h7L3.5 6z" fill="#000"/></svg></div>
<svg style="left:359px;top:931px" width="10" height="12" viewBox="0 0 10 12"><rect x="0" y="1" width="2" height="10" fill="#62b0ec"/><path d="M9 1v10L3 6z" fill="#62b0ec"/></svg>
<svg style="left:385px;top:931px" width="8" height="12" viewBox="0 0 8 12"><path d="M7 1v10L1 6z" fill="#62b0ec"/></svg>
<div class="t" style="left:412px;top:931px">第</div>
<div class="a" style="left:427px;top:926px;width:30px;height:22px;border:1px solid #95b8e7;background:#fff"><div class="t" style="left:3px;top:5px">1</div></div>
<div class="t" style="left:459px;top:931px">共1页</div>
<svg style="left:510px;top:931px" width="8" height="12" viewBox="0 0 8 12"><path d="M1 1v10l6-5z" fill="#62b0ec"/></svg>
<svg style="left:535px;top:931px" width="10" height="12" viewBox="0 0 10 12"><path d="M1 1v10l6-5z" fill="#62b0ec"/><rect x="8" y="1" width="2" height="10" fill="#62b0ec"/></svg>
<svg style="left:564px;top:930px" width="12" height="13" viewBox="0 0 12 13"><path d="M10 7.5a4.2 4.2 0 1 1-2-3.6" stroke="#2a7ad0" stroke-width="1.8" fill="none"/><path d="M6 1l4.5 1.5-2.5 3.5z" fill="#2a7ad0"/></svg>
<div class="t" style="left:1813px;top:931px">显示1到7,共7记录</div>
<div class="a" style="left:284px;top:952px;width:1632px;height:1px;background:#95b8e7"></div>
<div class="a" style="left:0;top:952px;width:279px;height:28px;background:#e0ecff;border-top:1px solid #95b8e7;border-bottom:1px solid #95b8e7;border-right:1px solid #95b8e7"></div>
<div class="a" style="left:284px;top:953px;width:1632px;height:27px;background:#e0ecff;border-bottom:1px solid #95b8e7;border-left:1px solid #95b8e7;border-right:1px solid #95b8e7"></div>
<svg style="left:259px;top:959px" width="11" height="12" viewBox="0 0 11 12"><path d="M1 6l4.5-4.5L10 6M1 10.5l4.5-4.5 4.5 4.5" stroke="#4a9de0" stroke-width="1.3" fill="none"/></svg>
<svg style="left:1895px;top:959px" width="11" height="12" viewBox="0 0 11 12"><path d="M1 6l4.5-4.5L10 6M1 10.5l4.5-4.5 4.5 4.5" stroke="#4a9de0" stroke-width="1.3" fill="none"/></svg>
<svg style="left:2px;top:985px" width="10" height="12" viewBox="0 0 10 12"><defs><linearGradient id="da" x1="0" y1="0" x2="1" y2="0"><stop offset="0" stop-color="#8cc8f8"/><stop offset="1" stop-color="#1e88e0"/></linearGradient></defs><path d="M3 0h4v6.5h3L5 12 0 6.5h3z" fill="url(#da)"/></svg>
<div class="t" style="left:18px;top:985px">下载速度： 474.01 KB/s | </div>
<svg style="left:161px;top:984px" width="11" height="12" viewBox="0 0 11 12"><defs><linearGradient id="ua" x1="0" y1="0" x2="0" y2="1"><stop offset="0" stop-color="#6ee04a"/><stop offset="1" stop-color="#1a8a10"/></linearGradient></defs><path d="M5.5 0l5 5.5H7.5V12h-4V5.5H0.5z" fill="url(#ua)"/></svg>
<div class="t" style="left:178px;top:985px">上传速度： 0.00 KB/s | 可用空间： 2.48 TB</div>
<div class="t" style="left:1510px;top:985px;letter-spacing:0.05px">Transmission 版本：2.94 (0), RPC: 15, WEB Control: 1.6.0 beta(20190923)</div>
<div class="a" style="left:1722px;top:984px;width:185px;height:10px;background:rgba(255,255,255,0.72)"></div>
<div class="a" style="left:1741px;top:978px;width:6px;height:3px;background:#fff"></div>
<div class="a" style="left:1826px;top:977px;width:11px;height:4px;background:#fff;border-radius:4px 4px 0 0"></div>
<div class="a" style="left:1841px;top:977px;width:12px;height:4px;background:#fff;border-radius:4px 4px 0 0"></div>
</body></html>
